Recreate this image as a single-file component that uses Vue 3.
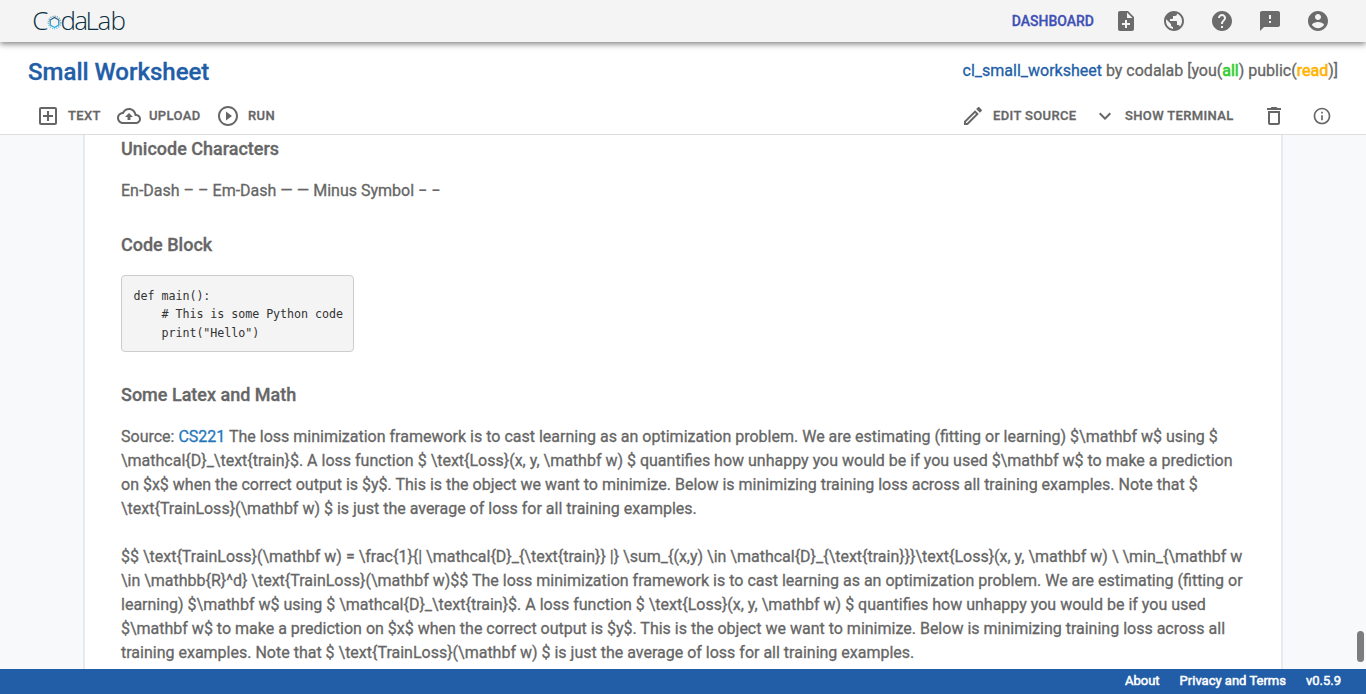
<script setup>
const navIcons = [
  'M14 2H6c-1.1 0-1.99.9-1.99 2L4 20c0 1.1.89 2 1.99 2H18c1.1 0 2-.9 2-2V8l-6-6zm2 14h-3v3h-2v-3H8v-2h3v-3h2v3h3v2zm-3-7V3.5L18.5 9H13z',
  'M12 2C6.48 2 2 6.48 2 12s4.48 10 10 10 10-4.48 10-10S17.52 2 12 2zm-1 17.93c-3.95-.49-7-3.85-7-7.93 0-.62.08-1.21.21-1.79L9 15v1c0 1.1.9 2 2 2v1.93zm6.9-2.54c-.26-.81-1-1.39-1.9-1.39h-1v-3c0-.55-.45-1-1-1H8v-2h2c.55 0 1-.45 1-1V7h2c1.1 0 2-.9 2-2v-.41c2.93 1.19 5 4.06 5 7.41 0 2.08-.8 3.97-2.1 5.39z',
  'M12 2C6.48 2 2 6.48 2 12s4.48 10 10 10 10-4.48 10-10S17.52 2 12 2zm1 17h-2v-2h2v2zm2.07-7.75l-.9.92C13.45 12.9 13 13.5 13 15h-2v-.5c0-1.1.45-2.1 1.17-2.83l1.24-1.26c.37-.36.59-.86.59-1.41 0-1.1-.9-2-2-2s-2 .9-2 2H8c0-2.21 1.79-4 4-4s4 1.79 4 4c0 .88-.36 1.68-.93 2.25z',
  'M20 2H4c-1.1 0-1.99.9-1.99 2L2 22l4-4h14c1.1 0 2-.9 2-2V4c0-1.1-.9-2-2-2zm-7 12h-2v-2h2v2zm0-4h-2V6h2v4z',
  'M12 2C6.48 2 2 6.48 2 12s4.48 10 10 10 10-4.48 10-10S17.52 2 12 2zm0 3c1.66 0 3 1.34 3 3s-1.34 3-3 3-3-1.34-3-3 1.34-3 3-3zm0 14.2c-2.5 0-4.71-1.28-6-3.22.03-1.99 4-3.08 6-3.08 1.99 0 5.97 1.09 6 3.08-1.29 1.94-3.5 3.22-6 3.22z',
]
const code = `def main():
    # This is some Python code
    print("Hello")`
const latexLines = [
  ' The loss minimization framework is to cast learning as an optimization problem. We are estimating (fitting or learning) $\\mathbf w$ using $',
  '\\mathcal{D}_\\text{train}$. A loss function $ \\text{Loss}(x, y, \\mathbf w) $ quantifies how unhappy you would be if you used $\\mathbf w$ to make a prediction',
  'on $x$ when the correct output is $y$. This is the object we want to minimize. Below is minimizing training loss across all training examples. Note that $',
  '\\text{TrainLoss}(\\mathbf w) $ is just the average of loss for all training examples.',
]
const formulaLines = [
  '$$ \\text{TrainLoss}(\\mathbf w) = \\frac{1}{| \\mathcal{D}_{\\text{train}} |} \\sum_{(x,y) \\in \\mathcal{D}_{\\text{train}}}\\text{Loss}(x, y, \\mathbf w) \\ \\min_{\\mathbf w',
  '\\in \\mathbb{R}^d} \\text{TrainLoss}(\\mathbf w)$$ The loss minimization framework is to cast learning as an optimization problem. We are estimating (fitting or',
  'learning) $\\mathbf w$ using $ \\mathcal{D}_\\text{train}$. A loss function $ \\text{Loss}(x, y, \\mathbf w) $ quantifies how unhappy you would be if you used',
  '$\\mathbf w$ to make a prediction on $x$ when the correct output is $y$. This is the object we want to minimize. Below is minimizing training loss across all',
  'training examples. Note that $ \\text{TrainLoss}(\\mathbf w) $ is just the average of loss for all training examples.',
]
</script>

<template>
  <div class="app">
    <header class="navbar">
      <svg class="logo" width="100" height="42" viewBox="0 0 100 42">
        <defs>
          <linearGradient id="ring" x1="0" y1="0" x2="0" y2="1">
            <stop offset="0" stop-color="#1c5a7c" />
            <stop offset="1" stop-color="#27b5ee" />
          </linearGradient>
        </defs>
        <text class="logo-text" y="30" x="0.2 28.6 42.3 53.6 65.6 78.4">CdaLab</text>
        <g fill="none" stroke="url(#ring)">
          <path d="M22.5 17.5l4.3 2.5v5l-4.3 2.5-4.3-2.5v-5z" stroke-width="1.2" />
          <circle cx="22.5" cy="22.5" r="6.2" stroke-width="1.5" stroke-dasharray="1.1 1.1" opacity=".6" />
          <path d="M22.5 27.5v3.3" stroke-width="1.5" />
        </g>
      </svg>
      <nav class="nav-right">
        <a class="dashboard">DASHBOARD</a>
        <span v-for="(d, i) in navIcons" :key="i" class="nav-icon">
          <svg width="24" height="24" viewBox="0 0 24 24"><path :d="d" /></svg>
        </span>
      </nav>
    </header>

    <section class="head">
      <div class="title-row">
        <h1>Small Worksheet</h1>
        <div class="perm"><a>cl_small_worksheet</a> by codalab [you(<span class="all">all</span>) public(<span class="read">read</span>)]</div>
      </div>
      <div class="toolbar">
        <div class="tools">
          <button class="btn-text">
            <svg width="24" height="24" viewBox="0 0 24 24"><path d="M19 3H5c-1.1 0-2 .9-2 2v14c0 1.1.9 2 2 2h14c1.1 0 2-.9 2-2V5c0-1.1-.9-2-2-2zm0 16H5V5h14v14zm-8-2h2v-4h4v-2h-4V7h-2v4H7v2h4z" /></svg>
            <span>TEXT</span>
          </button>
          <button class="btn-upload">
            <svg width="24" height="24" viewBox="0 0 24 24"><path d="M19.35 10.04C18.67 6.59 15.64 4 12 4 9.11 4 6.6 5.64 5.35 8.04 2.34 8.36 0 10.91 0 14c0 3.31 2.69 6 6 6h13c2.76 0 5-2.24 5-5 0-2.64-2.05-4.78-4.65-4.96zM19 18H6c-2.21 0-4-1.79-4-4 0-2.05 1.53-3.76 3.56-3.97l1.07-.11.5-.95C8.08 7.14 9.94 6 12 6c2.62 0 4.88 1.86 5.39 4.43l.3 1.5 1.53.11c1.56.1 2.78 1.41 2.78 2.96 0 1.65-1.35 3-3 3zM8 13h2.55v3h2.9v-3H16l-4-4z" /></svg>
            <span>UPLOAD</span>
          </button>
          <button class="btn-run">
            <svg width="24" height="24" viewBox="0 0 24 24"><path d="M10 16.5l6-4.5-6-4.5v9zM12 2C6.48 2 2 6.48 2 12s4.48 10 10 10 10-4.48 10-10S17.52 2 12 2zm0 18c-4.41 0-8-3.59-8-8s3.59-8 8-8 8 3.59 8 8-3.59 8-8 8z" /></svg>
            <span>RUN</span>
          </button>
        </div>
        <div class="tools right">
          <button class="btn-edit">
            <svg width="24" height="24" viewBox="0 0 24 24"><path d="M14.06 9.02l.92.92L5.92 19H5v-.92l9.06-9.06M17.66 3c-.25 0-.51.1-.7.29l-1.83 1.83 3.75 3.75 1.83-1.83c.39-.39.39-1.02 0-1.41l-2.34-2.34c-.2-.2-.45-.29-.71-.29zm-3.6 3.19L3 17.25V21h3.75L17.81 9.94l-3.75-3.75z" /></svg>
            <span>EDIT SOURCE</span>
          </button>
          <button class="btn-term">
            <svg width="24" height="24" viewBox="0 0 24 24"><path d="M16.59 8.59L12 13.17 7.41 8.59 6 10l6 6 6-6z" /></svg>
            <span>SHOW TERMINAL</span>
          </button>
          <button class="btn-trash">
            <svg width="24" height="24" viewBox="0 0 24 24"><path d="M6 19c0 1.1.9 2 2 2h8c1.1 0 2-.9 2-2V7H6v12zM8 9h8v10H8V9zm7.5-5l-1-1h-5l-1 1H5v2h14V4z" /></svg>
          </button>
          <button class="btn-info">
            <svg width="20" height="20" viewBox="0 0 24 24"><path d="M11 7h2v2h-2zm0 4h2v6h-2zm1-9C6.48 2 2 6.48 2 12s4.48 10 10 10 10-4.48 10-10S17.52 2 12 2zm0 18c-4.41 0-8-3.59-8-8s3.59-8 8-8 8 3.59 8 8-3.59 8-8 8z" /></svg>
          </button>
        </div>
      </div>
    </section>

    <main class="body">
      <article class="sheet">
        <h4>Unicode Characters</h4>
        <p class="dashes">En-Dash – – Em-Dash — — Minus Symbol − −</p>
        <h4>Code Block</h4>
        <pre>{{ code }}</pre>
        <h4>Some Latex and Math</h4>
        <p>Source: <a>CS221</a><template v-for="(l, i) in latexLines" :key="i"><br v-if="i">{{ l }}</template></p>
        <p class="formula"><template v-for="(l, i) in formulaLines" :key="i"><br v-if="i">{{ l }}</template></p>
      </article>
      <div class="thumb"></div>
    </main>

    <footer class="footer">
      <a>About</a><a>Privacy and Terms</a><a>v0.5.9</a>
    </footer>
  </div>
</template>

<style>
body { margin: 0; overflow: hidden; }
</style>

<style scoped>
.app {
  height: 694px;
  display: flex;
  flex-direction: column;
  font-family: Roboto, "Liberation Sans", sans-serif;
  color: #666;
  background: #fff;
  overflow: hidden;
  -webkit-text-stroke: .3px currentColor;
}
.navbar {
  flex: none;
  height: 42px;
  display: flex;
  justify-content: space-between;
  align-items: center;
  padding: 0 24px 0 32px;
  background: #f4f4f4;
  box-shadow: 0 2px 6px rgba(0, 0, 0, .5);
  z-index: 2;
}
.logo { display: block; -webkit-text-stroke: 0; }
.logo-text { font-family: "Open Sans", sans-serif; font-size: 26px; font-weight: 300; fill: #0a2f40; }
.nav-right { display: flex; align-items: center; }
.dashboard { font-size: 14px; font-weight: 500; color: #3f51b5; margin-right: 8px; }
.nav-icon { width: 48px; display: flex; justify-content: center; }
.nav-icon svg { fill: #6b6b6b; }
svg { flex: none; display: block; }
.head { flex: none; height: 92px; border-bottom: 1px solid #ddd; background: #fff; }
.title-row { height: 58px; display: flex; align-items: center; justify-content: space-between; padding: 0 28px; }
h1 { margin: 2px 0 0; font-size: 24px; line-height: 32px; font-weight: 500; color: #225ea8; }
.perm { font-size: 16px; line-height: 24px; }
a { color: #225ea8; }
.sheet a { color: #2577bd; }
.all { color: #32cd32; -webkit-text-stroke-width: .6px; }
.read { color: #ffb300; -webkit-text-stroke-width: .6px; }
.toolbar { display: flex; justify-content: space-between; padding: 4px 0 0 36px; }
.tools { display: flex; align-items: center; height: 24px; }
button { display: flex; align-items: center; padding: 0; border: 0; background: none; color: #666; font: 500 13px/24px Roboto, sans-serif; letter-spacing: .36px; white-space: nowrap; }
button svg { fill: #666; }
.btn-text { width: 81px; gap: 8px; }
.btn-upload { width: 99px; gap: 8px; }
.btn-run { gap: 8px; }
.btn-edit { width: 132px; gap: 8px; }
.btn-term { width: 169px; gap: 8px; }
.btn-trash { width: 50px; }
.btn-info { width: 54px; }
.body { position: relative; flex: 1; min-height: 0; overflow: hidden; background: #f8f9fb; }
.sheet {
  box-sizing: border-box;
  width: 1200px;
  height: 100%;
  margin: 0 auto;
  padding: 2px 35px 0 36px;
  background: #fff;
  border-left: 2px solid #e8eaed;
  border-right: 2px solid #e8eaed;
}
h4 { margin: 0; font-size: 18px; line-height: 24px; font-weight: 500; }
p { margin: 18px 0 0; font-size: 16px; line-height: 24px; white-space: nowrap; }
.dashes { margin-bottom: 30px; }
p.formula { margin-top: 24px; }
pre {
  box-sizing: border-box;
  width: 233px;
  height: 77px;
  margin: 18px 0 31px;
  padding: 10.6px 11.6px;
  border: 1px solid #ccc;
  border-radius: 4px;
  background: #f4f4f4;
  color: #333;
  font: 11.7px/18.5px "DejaVu Sans Mono", monospace;
  letter-spacing: -.06px;
  -webkit-text-stroke: 0;
}
.thumb { position: absolute; right: 2px; bottom: 7px; width: 7px; height: 31px; border-radius: 4px; background: #7d7d7d; }
.footer { flex: none; height: 25px; display: flex; justify-content: flex-end; gap: 20px; padding-right: 25px; background: #225ea8; font-size: 13px; line-height: 23px; font-weight: 400; -webkit-text-stroke-width: .5px; }
.footer a { color: #fff; }
</style>
